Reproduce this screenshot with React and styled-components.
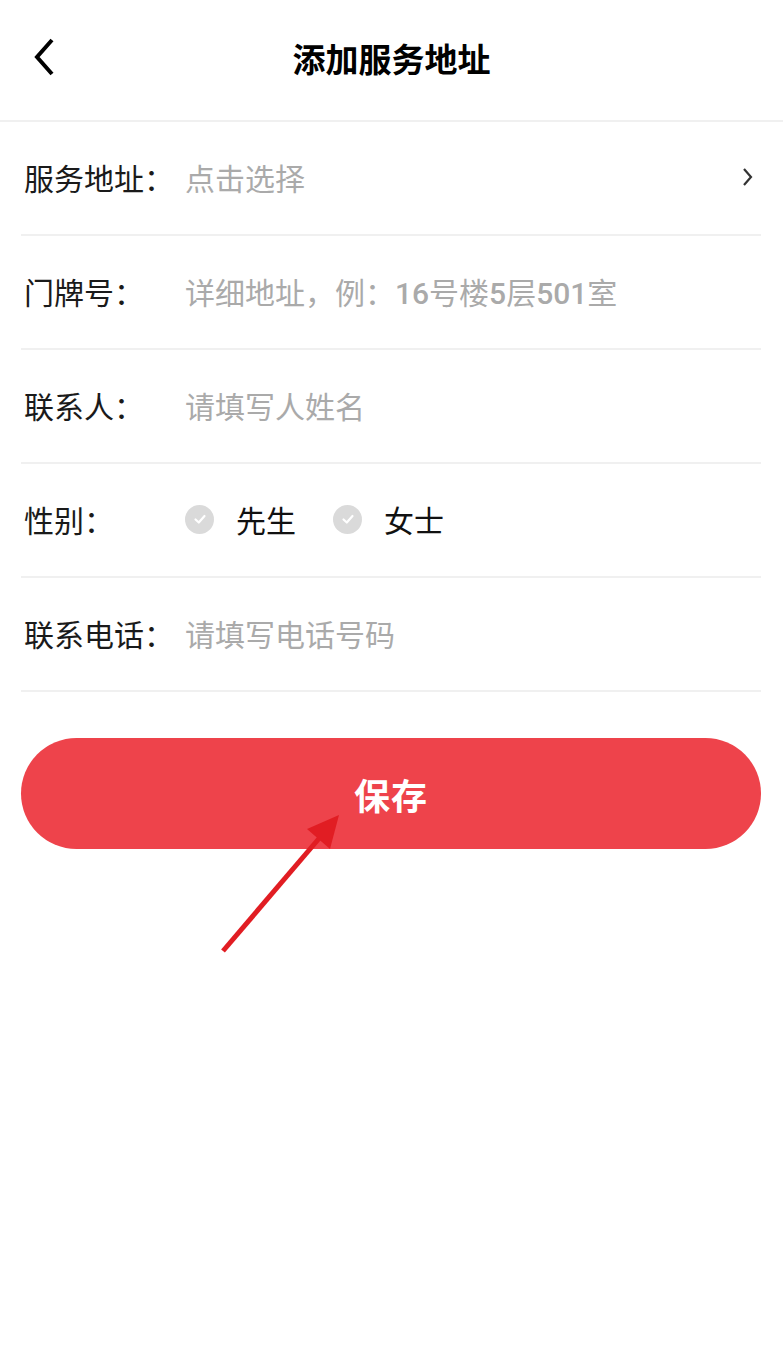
import React from "react";
import styled, { createGlobalStyle } from "styled-components";

const GlobalStyle = createGlobalStyle`
  html, body {
    margin: 0;
    padding: 0;
    background: #fff;
  }
  *, *::before, *::after {
    box-sizing: border-box;
  }
  body {
    font-family: Roboto, "Noto Sans CJK SC", "Noto Sans", sans-serif;
    color: #111;
  }
`;

const Page = styled.div`
  position: relative;
  width: 783px;
  min-height: 1345px;
  background: #fff;
`;

const Header = styled.header`
  position: relative;
  height: 122px;
  display: flex;
  align-items: center;
  justify-content: center;
  border-bottom: 2px solid #f0f0f0;
  padding-bottom: 4px;
`;

const BackButton = styled.button`
  position: absolute;
  left: 24px;
  top: 36px;
  width: 40px;
  height: 44px;
  padding: 0;
  border: none;
  background: none;
  display: flex;
  align-items: center;
  justify-content: center;
`;

const Title = styled.h1`
  margin: 0;
  font-size: 33px;
  font-weight: 700;
  color: #000;
`;

const Form = styled.div`
  padding: 0 22px 0 21px;
`;

const Row = styled.div`
  height: 114px;
  display: flex;
  align-items: center;
  border-bottom: 2px solid #f0f0f0;
  font-size: 30px;
  padding-bottom: 2px;
`;

const Label = styled.div`
  width: 164px;
  padding-left: 3px;
  flex-shrink: 0;
  color: #1a1a1a;
`;

const Placeholder = styled.div`
  flex: 1;
  color: #aaaaaa;
`;

const Digits = styled.span`
  font-weight: 500;
`;

const Options = styled.div`
  flex: 1;
  display: flex;
  align-items: center;
  gap: 37px;
`;

const Option = styled.div`
  display: flex;
  align-items: center;
  gap: 22px;
  color: #111;
`;

const Check = styled.span`
  width: 29px;
  height: 29px;
  border-radius: 50%;
  background: #dadada;
  display: flex;
  align-items: center;
  justify-content: center;
`;

const SaveButton = styled.button`
  display: block;
  margin: 46px 22px 0 21px;
  width: 740px;
  height: 111px;
  border: none;
  border-radius: 56px;
  background: #ee434b;
  color: #fff;
  font-family: inherit;
  font-size: 36px;
  font-weight: 700;
  letter-spacing: 1px;
`;

const Annotation = styled.svg`
  position: absolute;
  left: 0;
  top: 0;
  pointer-events: none;
`;

const CheckMark = () => (
  <svg width="16" height="16" viewBox="0 0 16 16">
    <path d="M3.5 8.5 L6.8 11.5 L12.5 5" fill="none" stroke="#fff" strokeWidth="2.2" strokeLinecap="round" strokeLinejoin="round" />
  </svg>
);

export default function App() {
  return (
    <Page>
      <GlobalStyle />
      <Header>
        <BackButton aria-label="返回">
          <svg width="28" height="42" viewBox="0 0 28 42">
            <path d="M22 3 L7 20 L22 37" fill="none" stroke="#000" strokeWidth="4" />
          </svg>
        </BackButton>
        <Title>添加服务地址</Title>
      </Header>

      <Form>
        <Row>
          <Label>服务地址：</Label>
          <Placeholder>点击选择</Placeholder>
          <svg width="14" height="22" viewBox="0 0 14 22" style={{ marginRight: 6 }}>
            <path d="M3 3 L10 11 L3 19" fill="none" stroke="#333" strokeWidth="2.2" />
          </svg>
        </Row>
        <Row>
          <Label>门牌号：</Label>
          <Placeholder>
            详细地址，例：<Digits>16</Digits>号楼<Digits>5</Digits>层<Digits>501</Digits>室
          </Placeholder>
        </Row>
        <Row>
          <Label>联系人：</Label>
          <Placeholder>请填写人姓名</Placeholder>
        </Row>
        <Row>
          <Label>性别：</Label>
          <Options>
            <Option>
              <Check><CheckMark /></Check>
              先生
            </Option>
            <Option>
              <Check><CheckMark /></Check>
              女士
            </Option>
          </Options>
        </Row>
        <Row>
          <Label>联系电话：</Label>
          <Placeholder>请填写电话号码</Placeholder>
        </Row>
      </Form>

      <SaveButton>保存</SaveButton>

      <Annotation width="783" height="1345" viewBox="0 0 783 1345">
        <line x1="223" y1="951" x2="322" y2="835" stroke="#e11d23" strokeWidth="5" />
        <polygon points="339,815 330,849 307,829" fill="#e11d23" />
      </Annotation>
    </Page>
  );
}
